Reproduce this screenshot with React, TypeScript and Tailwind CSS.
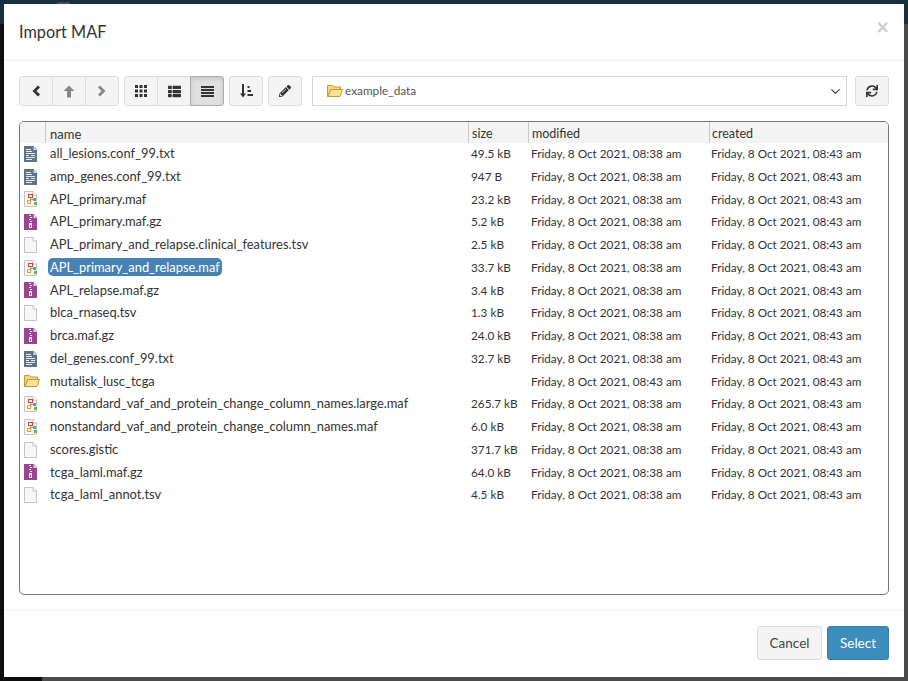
import React from "react";
import { ChevronDown } from "lucide-react";
import { FaThList, FaPencilAlt, FaSync } from "react-icons/fa";

type FileKind = "text" | "maf" | "zip" | "plain" | "folder";

const files: { name: string; size: string; modified: string; kind: FileKind; selected?: boolean }[] = [
  { name: "all_lesions.conf_99.txt", size: "49.5 kB", modified: "08:38", kind: "text" },
  { name: "amp_genes.conf_99.txt", size: "947 B", modified: "08:38", kind: "text" },
  { name: "APL_primary.maf", size: "23.2 kB", modified: "08:38", kind: "maf" },
  { name: "APL_primary.maf.gz", size: "5.2 kB", modified: "08:38", kind: "zip" },
  { name: "APL_primary_and_relapse.clinical_features.tsv", size: "2.5 kB", modified: "08:38", kind: "plain" },
  { name: "APL_primary_and_relapse.maf", size: "33.7 kB", modified: "08:38", kind: "maf", selected: true },
  { name: "APL_relapse.maf.gz", size: "3.4 kB", modified: "08:38", kind: "zip" },
  { name: "blca_rnaseq.tsv", size: "1.3 kB", modified: "08:38", kind: "plain" },
  { name: "brca.maf.gz", size: "24.0 kB", modified: "08:38", kind: "zip" },
  { name: "del_genes.conf_99.txt", size: "32.7 kB", modified: "08:38", kind: "text" },
  { name: "mutalisk_lusc_tcga", size: "", modified: "08:43", kind: "folder" },
  { name: "nonstandard_vaf_and_protein_change_column_names.large.maf", size: "265.7 kB", modified: "08:38", kind: "maf" },
  { name: "nonstandard_vaf_and_protein_change_column_names.maf", size: "6.0 kB", modified: "08:38", kind: "maf" },
  { name: "scores.gistic", size: "371.7 kB", modified: "08:38", kind: "plain" },
  { name: "tcga_laml.maf.gz", size: "64.0 kB", modified: "08:38", kind: "zip" },
  { name: "tcga_laml_annot.tsv", size: "4.5 kB", modified: "08:38", kind: "plain" },
];

function FolderIcon({ className = "" }: { className?: string }) {
  return (
    <svg width="16" height="14" viewBox="0 0 16 14" className={className}>
      <path d="M0.5 12.5V1.5h5l1.5 1.5h6.5v2.5H4L1 12.5z" fill="#f7d67e" stroke="#c89a35" />
      <path d="M1 12.5L3.8 5.5h11.7l-2.5 7z" fill="#fbe29a" stroke="#c89a35" />
    </svg>
  );
}

function FileIcon({ kind }: { kind: FileKind }) {
  if (kind === "folder") return <FolderIcon />;
  if (kind === "text")
    return (
      <svg width="14" height="16" viewBox="0 0 14 16">
        <path d="M0 0h9.5L13 3.5V16H0z" fill="#5f7488" />
        <path d="M9.5 0.5v3.5H13z" fill="#d5dce2" />
        <path d="M2 3.5h5M2 5.5h6M2 7.5h9M2 9.5h3M7 9.5h4M2 11.5h9M2 13.5h6" stroke="#e8edf1" strokeWidth="1" />
      </svg>
    );
  if (kind === "zip")
    return (
      <svg width="14" height="16" viewBox="0 0 14 16">
        <path d="M0 0h9.5L13 3.5V16H0z" fill="#98468f" />
        <path d="M9.5 0.5v3.5H13z" fill="#ecd4e6" />
        <path d="M5 1h2v1H5zM6 3h2v1H6zM5 5h2v1H5zM6 7h2v1H6z" fill="#f3e3ee" />
        <path d="M5 9h3v5H5z" fill="#f3e3ee" />
        <path d="M6 11h1v2H6z" fill="#98468f" />
      </svg>
    );
  return (
    <svg width="14" height="16" viewBox="0 0 14 16">
      <path d="M0.5 0.5h8.5l3.5 3.5v11.5H0.5z" fill="#f6f6f6" stroke="#c4c4c4" />
      <path d="M9 0.5V4h3.5" fill="#fff" stroke="#c4c4c4" />
      {kind === "maf" && (
        <>
          <rect x="4.5" y="3.5" width="4" height="3" fill="#fff" stroke="#d8402b" />
          <rect x="3.5" y="9.5" width="3" height="3" fill="#fff" stroke="#ef9d1c" />
          <rect x="9" y="7" width="3" height="3" fill="#4f9fd8" />
          <rect x="10" y="11" width="3" height="3" fill="#6fb64a" />
          <path d="M6.5 6.5v3M6.5 8.5h3" stroke="#999" strokeWidth="1" fill="none" />
        </>
      )}
    </svg>
  );
}

function ToolButton({
  children,
  active,
  className = "",
}: {
  children: React.ReactNode;
  active?: boolean;
  className?: string;
}) {
  return (
    <button
      className={`flex h-[30px] w-[34px] items-center justify-center border ${
        active
          ? "border-[#adadad] bg-[#e0e0e0] shadow-[inset_0_2px_4px_rgba(0,0,0,0.12)]"
          : "border-[#ddd] bg-[#f4f4f4]"
      } ${className}`}
    >
      {children}
    </button>
  );
}

const colClass = "flex h-[21px] items-center border-l border-[#c8c8c8] pl-[3px] pt-[4px]";

export default function App() {
  return (
    <div className="relative h-[681px] w-[908px] overflow-hidden bg-[#4b4b4b] font-['Lato',sans-serif] text-[12.5px] text-[#333]">
      {/* page dimmed behind the modal */}
      <div className="absolute inset-x-0 top-0 h-[24px] bg-[#17303f]" />
      <div className="absolute left-[57px] top-[2px] h-[2px] w-[13px] bg-[#4b4b4b]" />
      <div className="absolute bottom-0 left-0 top-[24px] w-[4px] bg-[#0c0e0e]" />
      <div className="absolute bottom-0 left-0 h-[4px] w-[42px] bg-[#0c0e0e]" />

      <div className="relative ml-[4px] mt-[4px] flex h-[673px] w-[900px] flex-col bg-white">
        <div className="flex h-[57px] items-start justify-between border-b border-[#f0f0f0] pl-[15px] pr-[15px] pt-[16px]">
          <h4 className="text-[16.3px] leading-[24px] text-[#333]">Import MAF</h4>
          <span className="mt-[-5px] text-[22px] font-bold leading-[24px] text-[#cccccc]">×</span>
        </div>

        <div className="flex flex-1 flex-col px-[15px] pt-[15px]">
          <div className="flex h-[30px] items-center">
            <div className="flex">
              <ToolButton className="rounded-l-[3px]">
                <svg width="12" height="12" viewBox="0 0 12 12">
                  <path d="M8 0.5l2 2-3.5 3.5 3.5 3.5-2 2L2.5 6z" fill="#333" />
                </svg>
              </ToolButton>
              <ToolButton className="-ml-px">
                <svg width="12" height="13" viewBox="0 0 12 13">
                  <path d="M6 0.5L11.5 6H8v6.5H4V6H0.5z" fill="#888" />
                </svg>
              </ToolButton>
              <ToolButton className="-ml-px rounded-r-[3px]">
                <svg width="12" height="12" viewBox="0 0 12 12">
                  <path d="M4 0.5l-2 2L5.5 6 2 9.5l2 2L9.5 6z" fill="#888" />
                </svg>
              </ToolButton>
            </div>
            <div className="ml-[5px] flex">
              <ToolButton className="rounded-l-[3px]">
                <svg width="12" height="12" viewBox="0 0 12 12" fill="#333">
                  <path d="M0 0h3v3H0zM4.5 0h3v3h-3zM9 0h3v3H9zM0 4.5h3v3H0zM4.5 4.5h3v3h-3zM9 4.5h3v3H9zM0 9h3v3H0zM4.5 9h3v3h-3zM9 9h3v3H9z" />
                </svg>
              </ToolButton>
              <ToolButton className="-ml-px">
                <FaThList className="size-[13px] text-[#333]" />
              </ToolButton>
              <ToolButton active className="-ml-px rounded-r-[3px]">
                <svg width="13" height="11" viewBox="0 0 13 11" fill="#333">
                  <path d="M0 0h13v2H0zM0 3h13v2H0zM0 6h13v2H0zM0 9h13v2H0z" />
                </svg>
              </ToolButton>
            </div>
            <ToolButton className="ml-[5px] rounded-[3px]">
              <svg width="13" height="14" viewBox="0 0 13 14" fill="#333">
                <path d="M2 0h2v9.5h2L3 13.5 0 9.5h2z" />
                <path d="M7.5 2h2v2h-2zM7.5 6h3.5v2H7.5zM7.5 10H13v2H7.5z" />
              </svg>
            </ToolButton>
            <ToolButton className="ml-[5px] rounded-[3px]">
              <FaPencilAlt className="size-[12px] text-[#333]" />
            </ToolButton>
            <div className="ml-[10px] flex h-[30px] w-[535px] items-center border border-[#d2d6de] pl-[14px] pr-[3px]">
              <FolderIcon className="mr-[2px]" />
              <span className="text-[11.8px] text-[#555]">example_data</span>
              <ChevronDown className="ml-auto size-[15px] text-[#444]" strokeWidth={2} />
            </div>
            <ToolButton className="ml-[8px] rounded-[3px]">
              <FaSync className="size-[12px] text-[#333]" />
            </ToolButton>
          </div>

          <div className="mt-[15px] h-[474px] w-[870px] overflow-hidden rounded-[5px] border border-[#777]">
            <div className="flex h-[21px] bg-[#f4f4f4]">
              <div className="w-[25px]" />
              <div className={`${colClass} w-[423px] !pl-[4px] text-[13px]`}>name</div>
              <div className={`${colClass} w-[60px]`}>size</div>
              <div className={`${colClass} w-[181px]`}>modified</div>
              <div className={`${colClass} flex-1 !pl-[2px]`}>created</div>
            </div>
            <div className="-mt-[0.5px] flex flex-col">
              {files.map((file) => (
                <div key={file.name} className="flex h-[22.75px] items-center text-[11.75px]">
                  <div className="flex w-[24px] justify-start pl-[4px]">
                    <FileIcon kind={file.kind} />
                  </div>
                  <div className="w-[427px] pl-[6px] text-[12.9px]">
                    {file.selected ? (
                      <span className="-ml-[2px] inline-block rounded-[5px] bg-[#4682b4] px-[2px] leading-[18px] text-white">
                        {file.name}
                      </span>
                    ) : (
                      file.name
                    )}
                  </div>
                  <div className="w-[60px]">{file.size}</div>
                  <div className="w-[180px]">Friday, 8 Oct 2021, {file.modified} am</div>
                  <div>Friday, 8 Oct 2021, 08:43 am</div>
                </div>
              ))}
            </div>
          </div>
        </div>

        <div className="flex h-[67px] items-start justify-end gap-[5px] border-t border-[#f0f0f0] pr-[15px] pt-[15px]">
          <button className="h-[34px] w-[65px] rounded-[3px] border border-[#ddd] bg-[#f4f4f4] pt-[1px] text-[13.5px] text-[#444]">
            Cancel
          </button>
          <button className="h-[34px] w-[62px] rounded-[3px] border border-[#367fa9] bg-[#3c8dbc] pt-[1px] text-[13.5px] text-white">
            Select
          </button>
        </div>
      </div>
    </div>
  );
}
